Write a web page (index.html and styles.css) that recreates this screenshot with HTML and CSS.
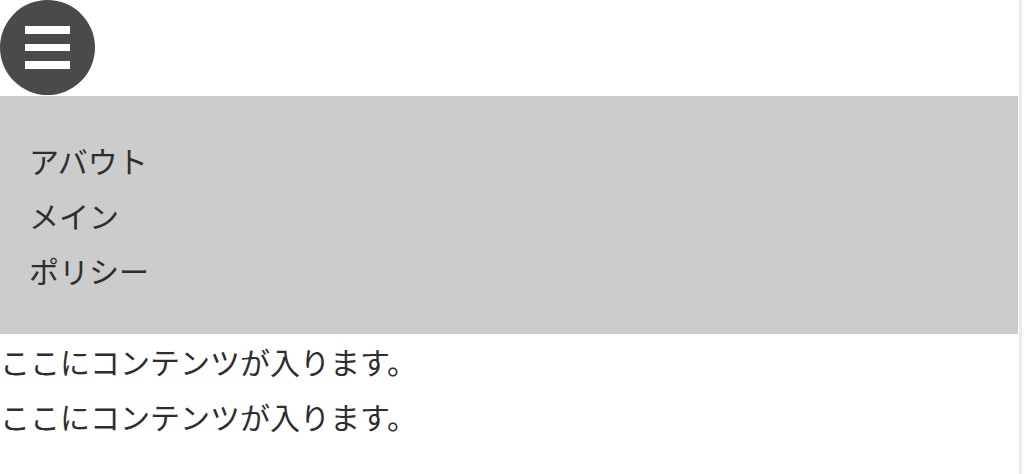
FILE: index.html
```html
<!DOCTYPE html>
<html lang="ja">
<head>
<meta charset="utf-8">
<title>Menu</title>
<link rel="stylesheet" href="styles.css">
</head>
<body>
<div class="page">
  <div class="main">
    <header class="header">
      <button class="menu-btn" aria-label="menu">
        <span class="bar"></span>
        <span class="bar"></span>
        <span class="bar"></span>
      </button>
    </header>
    <nav class="nav">
      <ul class="nav-list">
        <li>アバウト</li>
        <li>メイン</li>
        <li>ポリシー</li>
      </ul>
    </nav>
    <div class="content">
      <p>ここにコンテンツが入ります。</p>
      <p>ここにコンテンツが入ります。</p>
    </div>
  </div>
  <div class="scrollbar"><span class="track"></span></div>
</div>
</body>
</html>
```
FILE: styles.css
```css
html, body {
  margin: 0;
  padding: 0;
  background: #fff;
}
body {
  font-family: "Noto Sans CJK JP", "Noto Sans", sans-serif;
  font-size: 30px;
  line-height: 55px;
  color: #2e2e2e;
}
.page {
  display: flex;
  width: 1024px;
  height: 474px;
  overflow: hidden;
}
.main {
  flex: 1;
  min-width: 0;
}
.header {
  height: 96px;
}
.menu-btn {
  width: 95px;
  height: 95px;
  border-radius: 50%;
  background: #4a4a4a;
  border: 0;
  padding: 0;
  margin: 0;
  display: flex;
  flex-direction: column;
  align-items: center;
  justify-content: center;
  gap: 10px;
}
.bar {
  display: block;
  width: 45px;
  height: 7.5px;
  background: #fff;
}
.nav {
  background: #cccccc;
  padding: 37px 0 36px 29px;
}
.nav-list {
  list-style: none;
  margin: 0;
  padding: 0;
}
.content p {
  margin: 0;
}
.scrollbar {
  width: 5px;
  display: flex;
  padding-left: 1px;
  background: #fff;
}
.track {
  width: 3px;
  background: #ebebeb;
}
```
